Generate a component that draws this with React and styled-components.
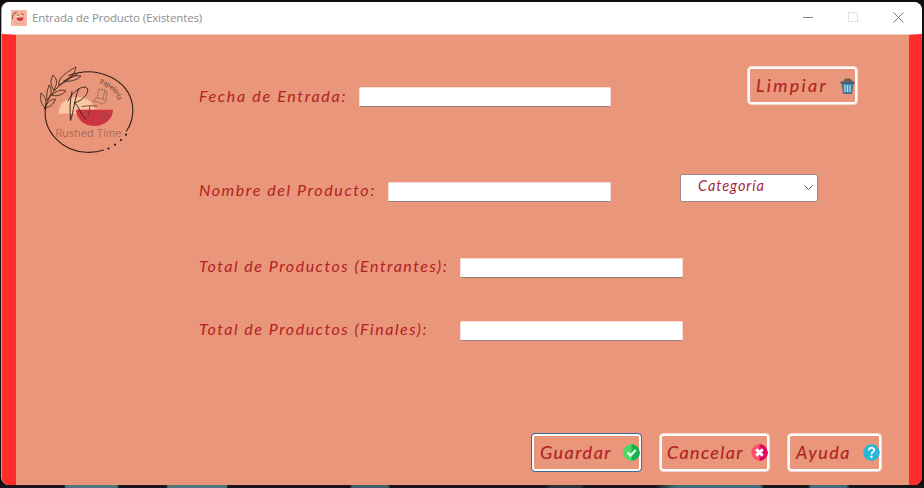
import React from 'react';
import styled, { createGlobalStyle } from 'styled-components';

const GlobalStyle = createGlobalStyle`
  * { box-sizing: border-box; }
  body { margin: 0; overflow: hidden; background: #100e10; }
`;

const script = `"Segoe Script", "Lato", sans-serif`;

const Desktop = styled.div`
  width: 924px;
  height: 488px;
  padding: 2px 2px 3px 1px;
  background:
    linear-gradient(90deg, #19141a 0 64px, #50767e 66px 117px, #19141a 119px 166px, #50767e 168px 226px,
      #19141a 228px 350px, #40606a 352px 388px, #19141a 390px 545px, #293440 550px 580px, #19141a 585px 655px,
      #426b7b 675px 760px, #17141a 764px 808px, #456b7c 811px 846px, #17141a 850px) 0 100% / 100% 4px no-repeat,
    #100e10;
`;

const Window = styled.main`
  display: flex;
  flex-direction: column;
  height: 483px;
  border-left: 1px solid #b8aaa5;
  border-radius: 8px;
  overflow: hidden;
  background: #e9967a;
`;

const TitleBar = styled.header`
  display: flex;
  align-items: center;
  height: 32px;
  flex: none;
  padding-left: 9px;
  background: #fff;
`;

const Title = styled.h1`
  flex: 1;
  margin: 0 0 0 5px;
  font: 400 11.5px/16px "Open Sans", sans-serif;
  letter-spacing: ${(p) => p.$tracking}px;
  color: #8d8d8d;
  white-space: nowrap;
`;

const Controls = styled.div`
  display: flex;
  align-items: center;
  gap: 35px;
  padding: 0 18px 2px 0;
`;

const ControlButton = styled.button`
  display: flex;
  padding: 0;
  border: 0;
  background: none;
  color: ${(p) => p.$color};
`;

const Client = styled.section`
  flex: 1;
  display: flex;
  flex-direction: column;
  border-top: 1px solid #f6cabc;
  border-left: 14px solid #ff2a2a;
  border-right: 13px solid #ff2a2a;
`;

const TopRow = styled.div`
  display: flex;
  align-items: flex-start;
  height: 139px;
  padding: 31px 51px 0 22px;
`;

const FieldRow = styled.div`
  display: flex;
  align-items: ${(p) => p.$align || 'center'};
  height: 28px;
  margin-left: 182px;
  margin-bottom: ${(p) => p.$after}px;
`;

const TopField = styled.div`
  display: flex;
  align-items: center;
  height: 20px;
  margin: 21px auto 0 60px;
`;

const Label = styled.label`
  width: ${(p) => p.$width}px;
  padding: 0 0 ${(p) => p.$lift}px 1px;
  font: italic 400 16px/20px ${script};
  letter-spacing: ${(p) => p.$tracking}px;
  color: #b22222;
  white-space: nowrap;
`;

const Field = styled.input`
  width: ${(p) => p.$width}px;
  height: 20px;
  padding: 0 4px;
  border: 1px solid #f8ded6;
  border-bottom-color: #928079;
  border-radius: 2px;
  background: #fff;
  outline: none;
`;

const Dropdown = styled.button`
  display: flex;
  align-items: center;
  justify-content: space-between;
  width: 138px;
  height: 28px;
  margin-left: 69px;
  padding: 0 4px 0 17px;
  border: 1px solid #a08a82;
  border-radius: 2px;
  background: #fff;
  font: italic 400 14.5px/18px ${script};
  letter-spacing: ${(p) => p.$tracking}px;
  color: #a5283a;
`;

const DropdownText = styled.span`
  margin-top: -4px;
`;

const Action = styled.button`
  display: flex;
  align-items: center;
  justify-content: space-between;
  width: ${(p) => p.$width}px;
  height: 39px;
  padding: 0 ${(p) => (p.$focused ? 1 : 0)}px 0 ${(p) => p.$inset}px;
  border: ${(p) => (p.$focused ? '1px solid #42679c' : '1px solid #f3d5ca')};
  border-radius: 4px;
  box-shadow: inset 0 0 0 2px #fff;
  background: #e9967a;
  font: italic 400 18px/22px ${script};
  letter-spacing: ${(p) => p.$tracking}px;
  color: #b22222;
  white-space: nowrap;
  svg { flex: none; margin-right: ${(p) => (p.$focused ? 0 : 1)}px; }
`;

const ActionText = styled.span`
  padding-bottom: 2px;
  -webkit-text-stroke: 0.15px #b22222;
`;

const Footer = styled.footer`
  display: flex;
  gap: 17px;
  margin: auto 27px 13px auto;
`;

const AppIcon = () => (
  <svg width="16" height="16" viewBox="0 0 16 16">
    <rect width="16" height="16" fill="#f3b79f" />
    <path d="M4 8a3 3 0 0 1 5-1v1z" fill="#fbe0c8" />
    <path d="M5.500 7.500h7a3.500 3.500 0 0 1-7 0z" fill="#d03742" />
    <path d="M1.500 9C1 6 3 3 6 2M1.500 5 5 2M7 6V4M10 3l3 2" fill="none" stroke="#82503f" strokeWidth=".9" />
    <path d="M3 11c2 3 7 4 10 1" fill="none" stroke="#d59480" strokeWidth=".7" />
  </svg>
);

const Logo = () => (
  <svg width="100" height="92" viewBox="38 66 100 92">
    <path d="M58.500 113.800C59 92 91 92 95.500 109.700H76l2 4.100z" fill="#fbc6a2" />
    <path d="M76 109.700h37c0 9-8 16.300-18.500 16.300S76 118.700 76 109.700z" fill="#cc3440" />
    <g fill="none" stroke="#352017" strokeLinecap="round">
      <path d="M69 75.500C97 65 128 79 132.500 105c1.500 10-1.500 20-6 26M45.500 108c-3 23 16 43 41 44.300q10 .3 17-2.300" strokeWidth="1.100" />
      <path d="M44.500 109C49 95 57 84 77 74.500" strokeWidth=".9" />
      <path d="M45 108c-4-4-5-9-4-15 5 4 6 9 4 15zM47 100c-1-8 1-11 2-15 4 5 2 11-2 15zM54 90c-5-6-3-10-1-15 5 4 4 10 1 15zM59 85c-2-7 8-13 17-18-1 7-7 14-17 18zM64 81c5-4 9-6 17-5-4 4-10 6-17 5zM52 95c4-4 9-6 14-4-4 4-9 6-14 4zM45.500 108c1-6 5-8 10-9-2 6-6 8-10 9z" strokeWidth=".8" />
      <path d="M72 91.500c-2 8-2.500 18-1.500 29 3-8 4-22 8-31M68 101c4-8 11-14 17-14 7 2 0 13-11 16 5 1 6 13 12 16" strokeWidth=".95" />
      <path d="M82 106.500q8-1.500 15-.5M90 106q-1 6-2 11" stroke="#6e4030" strokeWidth=".9" />
    </g>
    <g fill="none" stroke="#856050" strokeWidth=".7">
      <path d="m99 89 6 1-2 9-6-1zM105 90l2 2-1 9-3-2M92 101l6 1 4 2 4-2M96 98l-2 3M99 119l6-6 5-1-4 6z" />
    </g>
    <g fill="#291912">
      <circle cx="108.500" cy="148.500" r="1.100" /><circle cx="115" cy="144.700" r="1.100" />
      <circle cx="121" cy="140" r="1.100" /><circle cx="126" cy="134.700" r="1.100" />
    </g>
    <defs><path id="brandArc" d="M99.500 84q15 3 19 18" /></defs>
    <text fontFamily="Open Sans, sans-serif" fontSize="7" fill="#543126">
      <textPath href="#brandArc" textLength="26" lengthAdjust="spacingAndGlyphs">Papelería</textPath>
    </text>
    <text x="55.500" y="137" fontFamily="Inter, sans-serif" fontWeight="300" fontSize="9.700" textLength="66" lengthAdjust="spacingAndGlyphs" fill="#a05c4b">Rushed Time</text>
  </svg>
);

const TrashIcon = () => (
  <svg width="16" height="18" viewBox="0 0 16 18">
    <path d="m3 4.500 2-3h5l3 3z" fill="#6e5b56" />
    <path d="m2 6 1.500 10.500h8L13 6z" fill="#4388b0" stroke="#46657a" />
    <path d="M5 8v7M7.500 8v7M10 8v7" stroke="#b9e1ee" strokeWidth="1.200" />
    <path d="M.5 5.500h14" stroke="#44596a" strokeWidth="2" />
  </svg>
);

const CheckIcon = () => (
  <svg width="17" height="17" viewBox="0 0 17 17">
    <circle cx="8.500" cy="8.500" r="8.300" fill="#4bd865" />
    <path d="M8.500 .2a8.300 8.300 0 0 1 0 16.600z" fill="#13b153" />
    <path d="m4.500 8.500 3 3 5.200-5.500" fill="none" stroke="#edfff0" strokeWidth="2.300" />
  </svg>
);

const CrossIcon = () => (
  <svg width="17" height="17" viewBox="0 0 17 17">
    <circle cx="8.500" cy="8.500" r="8.300" fill="#ff5269" />
    <path d="M8.500 .2a8.300 8.300 0 0 1 0 16.600z" fill="#e30760" />
    <path d="m5.300 5.300 6.400 6.400m0-6.400-6.400 6.400" stroke="#fff" strokeWidth="3" />
  </svg>
);

const HelpIcon = () => (
  <svg width="17" height="17" viewBox="0 0 17 17">
    <circle cx="8.500" cy="8.500" r="8.300" fill="#28b5d8" />
    <path d="M5.800 6.500C5.800 2.600 11.400 3 11.200 6.200 11.100 8.200 8.500 8 8.500 10.300" fill="none" stroke="#fff" strokeWidth="1.900" />
    <circle cx="8.500" cy="12.800" r="1.200" fill="#fff" />
  </svg>
);

export default function App() {
  return (
    <>
      <GlobalStyle />
      <Desktop>
        <Window>
          <TitleBar>
            <AppIcon />
            <Title $tracking={-0.15}>Entrada de Producto (Existentes)</Title>
            <Controls>
              <ControlButton $color="#858585" aria-label="Minimizar">
                <svg width="10" height="11"><path d="M0 5.500h10" stroke="currentColor" /></svg>
              </ControlButton>
              <ControlButton $color="#e0e0e0" aria-label="Maximizar">
                <svg width="10" height="10"><rect x=".5" y=".5" width="9" height="9" fill="none" stroke="currentColor" /></svg>
              </ControlButton>
              <ControlButton $color="#777" aria-label="Cerrar">
                <svg width="11" height="11"><path d="m.5.5 10 10m0-10-10 10" stroke="currentColor" /></svg>
              </ControlButton>
            </Controls>
          </TitleBar>
          <Client>
            <TopRow>
              <Logo />
              <TopField>
                <Label $width={161} $lift={2} $tracking={1.7} htmlFor="fecha">Fecha de Entrada:</Label>
                <Field id="fecha" $width={252} />
              </TopField>
              <Action $width={111} $inset={8} $tracking={2.3}><ActionText>Limpiar</ActionText><TrashIcon /></Action>
            </TopRow>
            <FieldRow $after={52} $align="flex-end">
              <Label $width={190} $lift={2} $tracking={1.6} htmlFor="nombre">Nombre del Producto:</Label>
              <Field id="nombre" $width={223} />
              <Dropdown $tracking={0.95}>
                <DropdownText>Categoría</DropdownText>
                <svg width="9" height="6"><path d="m.5.5 4 4 4-4" fill="none" stroke="#555" /></svg>
              </Dropdown>
            </FieldRow>
            <FieldRow $after={35}>
              <Label $width={262} $lift={4} $tracking={1.52} htmlFor="entrantes">Total de Productos (Entrantes):</Label>
              <Field id="entrantes" $width={223} />
            </FieldRow>
            <FieldRow $after={0}>
              <Label $width={262} $lift={4} $tracking={1.52} htmlFor="finales">Total de Productos (Finales):</Label>
              <Field id="finales" $width={223} />
            </FieldRow>
            <Footer>
              <Action $width={111} $inset={8} $tracking={1.5} $focused><ActionText>Guardar</ActionText><CheckIcon /></Action>
              <Action $width={111} $inset={7} $tracking={1.35}><ActionText>Cancelar</ActionText><CrossIcon /></Action>
              <Action $width={95} $inset={8} $tracking={1.5}><ActionText>Ayuda</ActionText><HelpIcon /></Action>
            </Footer>
          </Client>
        </Window>
      </Desktop>
    </>
  );
}
